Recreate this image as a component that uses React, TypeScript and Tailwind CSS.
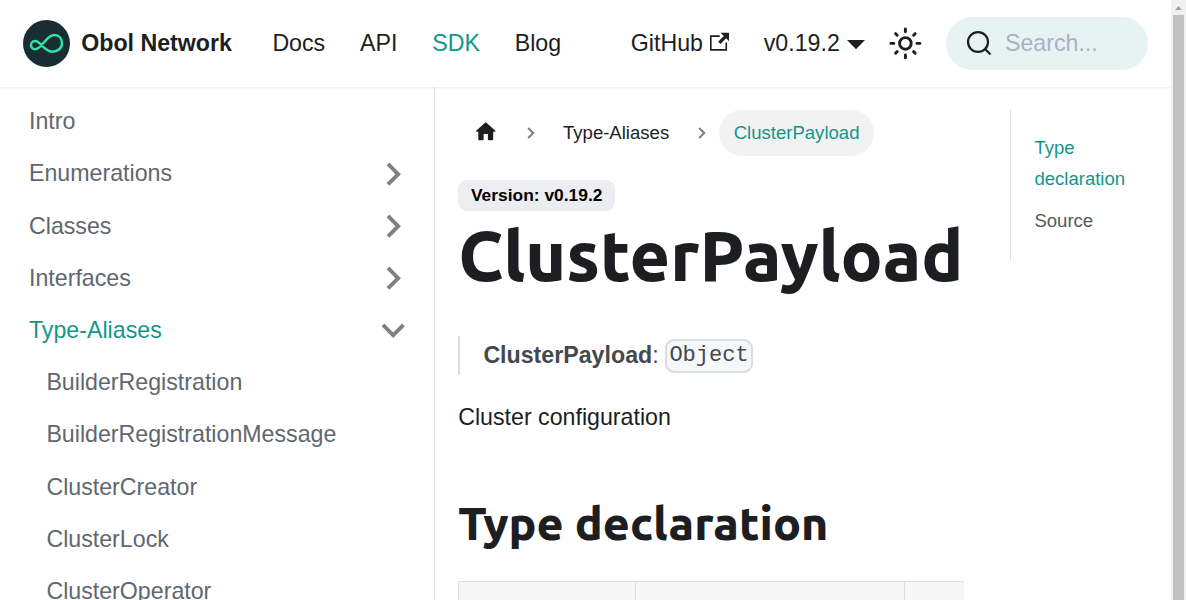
import React from "react";

const SANS = "font-['Liberation_Sans',Arial,sans-serif]";
const HEADING = "font-['Ubuntu','Noto_Sans',sans-serif]";

function Logo() {
  return (
    <svg className="h-[47px] w-[47px] shrink-0" viewBox="0 0 47 47" fill="none">
      <circle cx="23.5" cy="23.5" r="23.5" fill="#1a2d32" />
      <path
        d="M8 25.1C8 22.5 10.1 21 12.3 21C17.5 21 21 31.7 29.2 31.7C35 31.7 39 28 39 23.2C39 18.5 36 15 31.3 15C23 15 18.8 29.2 12.3 29.2C9.8 29.2 8 27.5 8 25.1Z"
        stroke="#2fe4ab"
        strokeWidth="2.5"
      />
    </svg>
  );
}

function SunIcon() {
  return (
    <svg className="h-[34.8px] w-[34.8px] shrink-0" viewBox="0 0 24 24" fill="none" stroke="#1c1e21" strokeWidth="2" strokeLinecap="round">
      <circle cx="12" cy="12" r="4" />
      <path d="M2 12H4M20 12H22M12 2V4M12 20V22M5.28 5.28L6.34 6.34M17.66 17.66L18.72 18.72M5.28 18.72L6.34 17.66M17.66 6.34L18.72 5.28" />
    </svg>
  );
}

function ExternalIcon() {
  return (
    <svg className="mb-[4px] ml-[7px] h-[19.5px] w-[19.5px] shrink-0" viewBox="0 0 24 24" fill="#1c1e21">
      <path d="M21 13v10h-21v-19h12v2h-10v15h17v-8h2zm3-12h-10.988l4.035 4-6.977 7.07 2.828 2.828 6.977-7.07 4.125 4.172v-11z" />
    </svg>
  );
}

function SearchIcon() {
  return (
    <svg className="h-[26.5px] w-[26.5px] shrink-0" viewBox="0 0 20 20" fill="none" stroke="#1c1e21" strokeWidth="1.7" strokeLinecap="round">
      <path d="M14.386 14.386l4.0877 4.0877-4.0877-4.0877c-2.9418 2.9419-7.7115 2.9419-10.6533 0-2.9419-2.9418-2.9419-7.7115 0-10.6533 2.9418-2.9419 7.7115-2.9419 10.6533 0 2.9419 2.9418 2.9419 7.7115 0 10.6533z" />
    </svg>
  );
}

function Caret({ open }: { open: boolean }) {
  return (
    <svg
      className={open ? "mr-[5.8px] h-[46.4px] w-[46.4px] shrink-0 rotate-180" : "mr-[5.8px] h-[46.4px] w-[46.4px] shrink-0 rotate-90"}
      viewBox="0 0 24 24"
      fill="#808080"
    >
      <path d="M7.41 15.41L12 10.83l4.59 4.58L18 14l-6-6-6 6z" />
    </svg>
  );
}

function Separator({ className }: { className: string }) {
  return (
    <svg className={`h-[12px] w-[8px] shrink-0 ${className}`} viewBox="0 0 8 12" fill="none" stroke="#808080" strokeWidth="2.1">
      <path d="M1.2 1L6.2 6L1.2 11" />
    </svg>
  );
}

const categories = ["Enumerations", "Classes", "Interfaces"];
const aliases = ["BuilderRegistration", "BuilderRegistrationMessage", "ClusterCreator", "ClusterLock", "ClusterOperator"];

function Navbar() {
  return (
    <header className="relative z-10 flex h-[87px] shrink-0 items-center bg-white pl-[23.2px] pr-[23.2px] shadow-[0_1px_2px_0_rgba(0,0,0,0.08)]">
      <Logo />
      <span className="ml-[11px] w-[191.2px] shrink-0 font-bold">Obol Network</span>
      <nav className="flex shrink-0 gap-[34.8px]">
        <a>Docs</a>
        <a>API</a>
        <a className="text-[#139689]">SDK</a>
        <a>Blog</a>
      </nav>
      <div className="ml-auto flex shrink-0 items-center">
        <a className="flex items-center">
          GitHub
          <ExternalIcon />
        </a>
        <a className="ml-[34.3px] flex items-center">
          v0.19.2
          <svg className="ml-[7px] mt-[3px] h-[9.3px] w-[18px]" viewBox="0 0 18 9.3" fill="#1c1e21">
            <path d="M0 0H18L9 9.3Z" />
          </svg>
        </a>
        <span className="ml-[23px] mr-[23.2px]">
          <SunIcon />
        </span>
        <div className="flex h-[53px] w-[202px] items-center rounded-full bg-[#e7f3f3] pl-[19.8px]">
          <SearchIcon />
          <span className="ml-[12.9px] text-[#a9b1c7]">Search...</span>
        </div>
      </div>
    </header>
  );
}

function Sidebar() {
  return (
    <aside className="w-[435px] shrink-0 overflow-hidden border-r border-[#dadde1] px-[11.6px] pt-[11.5px] leading-[29px] text-[#606770]">
      <ul className="flex flex-col gap-[5.8px]">
        <li className="flex h-[46.4px] shrink-0 items-center pl-[17.4px]">Intro</li>
        {categories.map((name) => (
          <li key={name} className="flex h-[46.4px] shrink-0 items-center justify-between pl-[17.4px]">
            {name}
            <Caret open={false} />
          </li>
        ))}
        <li className="flex h-[46.4px] shrink-0 items-center justify-between pl-[17.4px] text-[#139689]">
          Type-Aliases
          <Caret open />
        </li>
        {aliases.map((name) => (
          <li key={name} className="flex h-[46.4px] shrink-0 items-center pl-[34.8px]">
            {name}
          </li>
        ))}
      </ul>
    </aside>
  );
}

function Article() {
  return (
    <main className="ml-[23.2px] w-[505.8px] shrink-0 overflow-hidden pt-[23px]">
      <nav className="flex h-[46px] items-center text-[18.56px]">
        <svg className="mb-[2px] ml-[14.8px] h-[25.5px] w-[25.5px] shrink-0" viewBox="0 0 24 24" fill="#1c1e21">
          <path d="M10 19v-5h4v5c0 .55.45 1 1 1h3c.55 0 1-.45 1-1v-7h1.7c.46 0 .68-.57.33-.87L12.67 3.6c-.38-.34-.96-.34-1.34 0l-8.36 7.53c-.34.3-.13.87.33.87H5v7c0 .55.45 1 1 1h3c.55 0 1-.45 1-1z" />
        </svg>
        <Separator className="ml-[28.5px]" />
        <span className="ml-[28px]">Type-Aliases</span>
        <Separator className="ml-[28.5px]" />
        <span className="ml-[13px] flex h-[46px] items-center rounded-full bg-[#f2f2f2] px-[15px] text-[#139689]">ClusterPayload</span>
      </nav>
      <span className="mt-[24px] flex h-[31px] w-[157px] items-center justify-center rounded-[9px] bg-[#ebedf0] text-[17.4px] font-bold text-black">
        Version: v0.19.2
      </span>
      <h1 className={`${HEADING} mt-[1px] h-[87px] text-[69.6px] font-extrabold leading-[87px]`}>ClusterPayload</h1>
      <blockquote className="mt-[37px] h-[39px] border-l-2 border-[#dadde1] pl-[23.2px] leading-[38.3px] text-[#444950]">
        <strong>ClusterPayload</strong>:{" "}
        <code className="rounded-[9.3px] border-2 border-[#dadde1] bg-[#f6f7f8] px-[2.3px] py-[2.3px] align-middle font-['Liberation_Mono',monospace] text-[22.04px]">
          Object
        </code>
      </blockquote>
      <p className="mt-[23px] leading-[38.3px]">Cluster configuration</p>
      <h2 className={`${HEADING} mt-[58px] h-[58px] text-[46.4px] font-extrabold leading-[58px]`}>Type declaration</h2>
      <div className="mt-[29px] flex h-[60px] w-[700px] border-l border-t border-[#dadde1] bg-[#f7f7f7]">
        <div className="w-[177px] shrink-0 border-r border-[#dadde1]" />
        <div className="w-[269px] shrink-0 border-r border-[#dadde1]" />
      </div>
    </main>
  );
}

function Toc() {
  return (
    <aside className="ml-[46px] mt-[23px] flex h-[150px] w-[140px] shrink-0 flex-col border-l border-[#dadde1] pl-[23.4px] pt-[23px] text-[18.56px] leading-[30.6px]">
      <a className="text-[#139689]">
        Type
        <br />
        declaration
      </a>
      <a className="mt-[11.6px] text-[#525860]">Source</a>
    </aside>
  );
}

export default function App() {
  return (
    <div className={`${SANS} flex h-[600px] w-[1186px] overflow-hidden bg-white text-[23.2px] text-[#1c1e21]`}>
      <div className="flex w-[1171px] shrink-0 flex-col overflow-hidden">
        <Navbar />
        <div className="flex min-h-0 flex-1 overflow-hidden">
          <Sidebar />
          <Article />
          <Toc />
        </div>
      </div>
      <div className="flex w-[15px] shrink-0 flex-col items-center bg-[#f1f1f1]">
        <svg className="h-[15px] w-[15px] shrink-0" viewBox="0 0 15 15" fill="#a3a3a3">
          <path d="M4 10L7.5 6L11 10Z" />
        </svg>
        <div className="w-[11px] flex-1 bg-[#c1c1c1]" />
      </div>
    </div>
  );
}
